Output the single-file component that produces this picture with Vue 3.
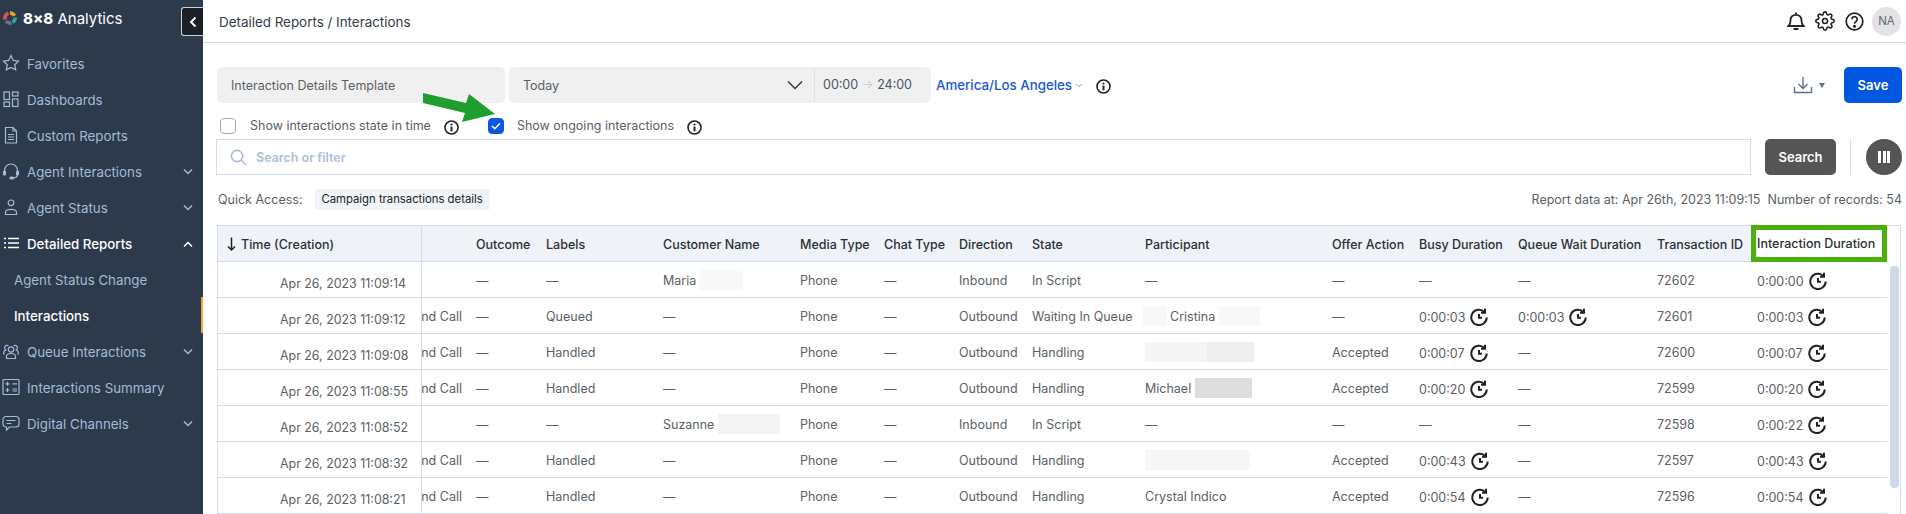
<script setup>
const nav = [
  { label: 'Favorites', icon: 'star' },
  { label: 'Dashboards', icon: 'dash' },
  { label: 'Custom Reports', icon: 'doc' },
  { label: 'Agent Interactions', icon: 'headset', chev: 'down' },
  { label: 'Agent Status', icon: 'person', chev: 'down' },
  { label: 'Detailed Reports', icon: 'list', chev: 'up', open: true },
  { label: 'Agent Status Change', sub: true },
  { label: 'Interactions', sub: true, active: true },
  { label: 'Queue Interactions', icon: 'group', chev: 'down' },
  { label: 'Interactions Summary', icon: 'calc' },
  { label: 'Digital Channels', icon: 'chat', chev: 'down' },
]
const heads = ['', 'Outcome', 'Labels', 'Customer Name', 'Media Type', 'Chat Type', 'Direction', 'State', 'Participant', 'Offer Action', 'Busy Duration', 'Queue Wait Duration', 'Transaction ID', 'Interaction Duration']
const d = '—'
const rows = [
  { time: 'Apr 26, 2023 11:09:14', type: '', labels: d, cust: 'Maria', custBlot: [{ w: 43, c: '#f8f8f8' }], dir: 'Inbound', state: 'In Script', part: d, offer: d, busy: d, wait: d, id: '72602', dur: '0:00:00' },
  { time: 'Apr 26, 2023 11:09:12', type: 'nd Call', labels: 'Queued', cust: d, dir: 'Outbound', state: 'Waiting In Queue', part: 'Cristina', partPre: 24, partBlot: [{ w: 41, c: '#f8f8f8' }], offer: d, busy: '0:00:03', wait: '0:00:03', id: '72601', dur: '0:00:03' },
  { time: 'Apr 26, 2023 11:09:08', type: 'nd Call', labels: 'Handled', cust: d, dir: 'Outbound', state: 'Handling', part: '', partBlot: [{ w: 62, c: '#f5f5f5' }, { w: 47, c: '#eeeeee' }], offer: 'Accepted', busy: '0:00:07', wait: d, id: '72600', dur: '0:00:07' },
  { time: 'Apr 26, 2023 11:08:55', type: 'nd Call', labels: 'Handled', cust: d, dir: 'Outbound', state: 'Handling', part: 'Michael', partBlot: [{ w: 57, c: '#dddddd' }], offer: 'Accepted', busy: '0:00:20', wait: d, id: '72599', dur: '0:00:20' },
  { time: 'Apr 26, 2023 11:08:52', type: '', labels: d, cust: 'Suzanne', custBlot: [{ w: 62, c: '#f4f4f4' }], dir: 'Inbound', state: 'In Script', part: d, offer: d, busy: d, wait: d, id: '72598', dur: '0:00:22' },
  { time: 'Apr 26, 2023 11:08:32', type: 'nd Call', labels: 'Handled', cust: d, dir: 'Outbound', state: 'Handling', part: '', partBlot: [{ w: 105, c: '#f6f6f6' }], offer: 'Accepted', busy: '0:00:43', wait: d, id: '72597', dur: '0:00:43' },
  { time: 'Apr 26, 2023 11:08:21', type: 'nd Call', labels: 'Handled', cust: d, dir: 'Outbound', state: 'Handling', part: 'Crystal Indico', offer: 'Accepted', busy: '0:00:54', wait: d, id: '72596', dur: '0:00:54' },
]
</script>

<template>
  <div class="app">
    <aside class="side">
      <div class="brand">
        <svg class="logo" width="14" height="14" viewBox="0 0 14 14" fill="none" stroke-width="3.600">
          <path d="M7 2a5 5 0 0 1 4.500 2.800" stroke="#eda22c" />
          <path d="M12 6.500a5 5 0 0 1-2.500 4.800" stroke="#2fa79a" />
          <path d="M8.500 11.800A5 5 0 0 1 3 10" stroke="#5e7a86" />
          <path d="M2.200 8.500A5 5 0 0 1 5.500 2.200" stroke="#d8584c" />
        </svg>
        <span class="brand-text"><b>8x8</b> Analytics</span>
        <button class="collapse">
          <svg width="8" height="12" viewBox="0 0 8 12" fill="none" stroke="#fff" stroke-width="2"><path d="M6.500 1.500 2 6l4.500 4.500" /></svg>
        </button>
      </div>
      <nav class="nav">
        <div v-for="n in nav" :key="n.label" class="item" :class="{ sub: n.sub, active: n.active, open: n.open }">
          <svg v-if="n.icon" class="ico" width="18" height="18" viewBox="0 0 18 18" fill="none" stroke="currentColor" stroke-width="1.200">
            <path v-if="n.icon === 'star'" d="M9 1.500l2.300 4.900 5.200.7-3.800 3.600 1 5.200L9 13.400l-4.700 2.500 1-5.200L1.500 7.100l5.200-.7z" />
            <g v-else-if="n.icon === 'dash'">
              <rect x="2" y="2" width="5.500" height="7.500" /><rect x="10.500" y="2" width="5.500" height="4" /><rect x="2" y="12" width="5.500" height="4.500" /><rect x="10.500" y="9" width="5.500" height="7.500" />
            </g>
            <g v-else-if="n.icon === 'doc'">
              <path d="M3.500 1.500h7.500l3.500 3.500v12h-11z" /><path d="M11 1.500V5h3.500M6 8.500h6M6 11h6M6 13.500h6" />
            </g>
            <g v-else-if="n.icon === 'headset'">
              <path d="M2.500 11V8.500a6.500 6.500 0 0 1 13 0V11" /><path d="M15.500 12c0 2.500-2 4-4.500 4" /><rect x="1.500" y="9" width="2" height="4" rx="1" fill="currentColor" /><rect x="14.500" y="9" width="2" height="4" rx="1" fill="currentColor" /><rect x="8" y="15" width="3.500" height="2" rx="1" fill="currentColor" />
            </g>
            <g v-else-if="n.icon === 'person'">
              <circle cx="9" cy="4.800" r="2.800" /><path d="M3.500 16.500v-2.200c0-1.800 1.800-3 5.500-3s5.500 1.200 5.500 3v2.200z" />
            </g>
            <g v-else-if="n.icon === 'list'" stroke-width="1.500">
              <path d="M6 4.500h11M6 9h11M6 13.500h11M2 4.500h2M2 9h2M2 13.500h2" />
            </g>
            <g v-else-if="n.icon === 'group'">
              <circle cx="9" cy="7.500" r="2.700" /><path d="M4.500 16.500v-2c0-1.600 1.800-3 4.500-3s4.500 1.400 4.500 3v2zM6.300 3.700a2.400 2.400 0 0 0-3.700 2.100c0 1 .5 1.700 1.200 2.100-1.400.6-2.200 1.600-2.200 3 0 .7.300 1.200.9 1.500M11.700 3.700a2.400 2.400 0 0 1 3.700 2.100c0 1-.5 1.700-1.200 2.100 1.400.6 2.200 1.600 2.200 3 0 .7-.3 1.200-.9 1.500" />
            </g>
            <g v-else-if="n.icon === 'calc'">
              <rect x="1" y="1.500" width="16" height="15" rx="1" /><path d="M3.500 5.800h4M5.500 3.800v4M3.500 12h4M5.500 10v4M10.500 5.800H15M10.500 11H15M10.500 13H15" />
            </g>
            <g v-else-if="n.icon === 'chat'">
              <path d="M4 2.500h10a3 3 0 0 1 3 3v4.500a3 3 0 0 1-3 3H7.500l-3 3v-3H4a3 3 0 0 1-3-3V5.500a3 3 0 0 1 3-3z" /><path d="M4.500 6.500h9M4.500 9.500h5" />
            </g>
          </svg>
          <span class="item-label">{{ n.label }}</span>
          <svg v-if="n.chev" class="chev" :class="{ up: n.chev === 'up' }" width="12" height="8" viewBox="0 0 12 8" fill="none" stroke="currentColor" stroke-width="1.500"><path d="M2 1.500l4 4 4-4" /></svg>
        </div>
      </nav>
    </aside>

    <main class="main">
      <header class="top">
        <span class="crumb">Detailed Reports / Interactions</span>
        <div class="top-icons">
          <svg width="18" height="20" viewBox="0 0 18 20" fill="none" stroke="#222" stroke-width="1.800"><path d="M1.500 15h15c-1.500-1.300-2-2.800-2-5.500C14.500 6 12.300 3.800 9 3.800S3.500 6 3.500 9.500c0 2.700-.5 4.200-2 5.500z" /><path d="M9 3.500V1.500M6.500 18h5" /></svg>
          <svg width="20" height="20" viewBox="0 0 24 24" fill="none" stroke="#222" stroke-width="1.900"><circle cx="12" cy="12" r="3" /><path d="M19.400 15a1.650 1.650 0 0 0 .33 1.820l.06.06a2 2 0 0 1 0 2.830 2 2 0 0 1-2.830 0l-.06-.06a1.650 1.650 0 0 0-1.820-.33 1.650 1.650 0 0 0-1 1.510V21a2 2 0 0 1-2 2 2 2 0 0 1-2-2v-.09A1.650 1.650 0 0 0 9 19.400a1.650 1.650 0 0 0-1.820.33l-.06.06a2 2 0 0 1-2.830 0 2 2 0 0 1 0-2.830l.06-.06a1.650 1.650 0 0 0 .33-1.820 1.650 1.650 0 0 0-1.510-1H3a2 2 0 0 1-2-2 2 2 0 0 1 2-2h.09A1.650 1.650 0 0 0 4.600 9a1.650 1.650 0 0 0-.33-1.820l-.06-.06a2 2 0 0 1 0-2.830 2 2 0 0 1 2.830 0l.06.06a1.650 1.650 0 0 0 1.820.33H9a1.650 1.650 0 0 0 1-1.510V3a2 2 0 0 1 2-2 2 2 0 0 1 2 2v.09a1.650 1.650 0 0 0 1 1.510 1.650 1.650 0 0 0 1.820-.33l.06-.06a2 2 0 0 1 2.830 0 2 2 0 0 1 0 2.830l-.06.06a1.650 1.650 0 0 0-.33 1.820V9a1.650 1.650 0 0 0 1.510 1H21a2 2 0 0 1 2 2 2 2 0 0 1-2 2h-.09a1.650 1.650 0 0 0-1.510 1z" /></svg>
          <svg width="19" height="19" viewBox="0 0 19 19" fill="none" stroke="#222" stroke-width="1.700"><circle cx="9.500" cy="9.500" r="8.300" /><path d="M6.800 7.300a2.700 2.700 0 1 1 4.100 2.300c-.9.600-1.400 1-1.400 2.100" /><circle cx="9.500" cy="14.200" r=".7" fill="#222" /></svg>
          <span class="avatar">NA</span>
        </div>
      </header>

      <section class="content">
        <div class="controls">
          <div class="pill template">Interaction Details Template</div>
          <div class="pill range">
            <span class="range-label">Today</span>
            <svg class="range-chev" width="16" height="10" viewBox="0 0 16 10" fill="none" stroke="#333" stroke-width="1.400"><path d="M1 1.500l7 7 7-7" /></svg>
            <span class="range-time">00:00 <i>→</i> 24:00</span>
          </div>
          <span class="tz">America/Los Angeles</span>
          <svg class="tz-chev" width="8" height="5" viewBox="0 0 8 5" fill="none" stroke="#7fa2e0" stroke-width="1"><path d="M1 1l3 3 3-3" /></svg>
          <svg class="info tz-info" width="15" height="15" viewBox="0 0 15 15"><use href="#info-g" /></svg>
          <div class="spacer"></div>
          <svg width="20" height="18" viewBox="0 0 20 18" fill="none" stroke="#5c7088" stroke-width="1.400"><path d="M10 1v11M5.500 8l4.500 4.500L14.500 8M1.500 11v5.500h17V11" /></svg>
          <span class="caret"></span>
          <button class="save">Save</button>
        </div>

        <div class="checks">
          <span class="box"></span>
          <span class="check-label first">Show interactions state in time</span>
          <svg class="info" width="15" height="15" viewBox="0 0 15 15">
            <defs><g id="info-g"><circle cx="7.500" cy="7.500" r="6.500" fill="none" stroke="#222" stroke-width="1.600" /><circle cx="7.500" cy="4.500" r="1.100" fill="#222" /><path d="M7.500 6.600v4.700" stroke="#222" stroke-width="2" /></g></defs>
            <use href="#info-g" />
          </svg>
          <span class="box on">
            <svg width="10" height="8" viewBox="0 0 10 8" fill="none" stroke="#fff" stroke-width="1.400"><path d="M1 4l2.800 2.800L9 1.200" /></svg>
          </span>
          <span class="check-label second">Show ongoing interactions</span>
          <svg class="info" width="15" height="15" viewBox="0 0 15 15"><use href="#info-g" /></svg>
        </div>
        <svg class="arrow" width="78" height="34" viewBox="0 0 78 34"><path d="M3 3 L46 13 L49 4 L75 24 L42 32 L45 23 L3 13 Z" fill="#1e9e2f" /></svg>

        <div class="search-row">
          <div class="search">
            <svg width="17" height="17" viewBox="0 0 17 17" fill="none" stroke="#a9bdd8" stroke-width="1.600"><circle cx="7" cy="7" r="5.600" /><path d="M11 11l5 5" /></svg>
            <span>Search or filter</span>
          </div>
          <button class="search-btn">Search</button>
          <span class="vline"></span>
          <button class="cols"><i></i><i></i><i></i></button>
        </div>

        <div class="quick">
          <span class="quick-label">Quick Access:</span>
          <span class="chip">Campaign transactions details</span>
          <div class="spacer"></div>
          <span class="meta">Report data at: Apr 26th, 2023 11:09:15</span>
          <span class="meta records">Number of records: 54</span>
        </div>

        <div class="table">
          <div class="fixed">
            <div class="fixed-head">
              <svg width="11" height="16" viewBox="0 0 11 16" fill="none" stroke="#222" stroke-width="1.500"><path d="M5.500 1.500v12.500M2 10.500l3.500 3.500L9 10.500" /></svg>
              Time (Creation)
            </div>
            <div v-for="r in rows" :key="r.id" class="fixed-cell">{{ r.time }}</div>
          </div>
          <div class="scroll">
            <div class="grid head">
              <div v-for="(h, i) in heads" :key="i" class="cell" :class="{ hl: i === 13 }">{{ h }}</div>
            </div>
            <div v-for="r in rows" :key="r.id" class="grid body">
              <div class="cell clip">{{ r.type }}</div>
              <div class="cell">{{ d }}</div>
              <div class="cell">{{ r.labels }}</div>
              <div class="cell">
                {{ r.cust }}
                <span v-for="(b, i) in r.custBlot" :key="i" class="blot" :style="{ width: b.w + 'px', background: b.c }"></span>
              </div>
              <div class="cell">Phone</div>
              <div class="cell">{{ d }}</div>
              <div class="cell">{{ r.dir }}</div>
              <div class="cell">{{ r.state }}</div>
              <div class="cell">
                <span v-if="r.partPre" class="blot pre" :style="{ width: r.partPre + 'px', background: '#f8f8f8' }"></span>
                {{ r.part }}
                <span v-for="(b, i) in r.partBlot" :key="i" class="blot" :class="{ tight: !r.part }" :style="{ width: b.w + 'px', background: b.c }"></span>
              </div>
              <div class="cell">{{ r.offer }}</div>
              <div class="cell">
                <span :class="{ timer: r.busy !== d }">{{ r.busy }}
                  <svg v-if="r.busy !== d" width="18" height="18" viewBox="0 0 18 18" fill="none" stroke="#222" stroke-width="2"><path d="M14.400 3.900A7.700 7.700 0 1 0 16.700 9.500" /><path d="M15 .8v4h-4" /><path d="M9 6v3.700h3" /></svg>
                </span>
              </div>
              <div class="cell">
                <span :class="{ timer: r.wait !== d }">{{ r.wait }}
                  <svg v-if="r.wait !== d" width="18" height="18" viewBox="0 0 18 18" fill="none" stroke="#222" stroke-width="2"><path d="M14.400 3.900A7.700 7.700 0 1 0 16.700 9.500" /><path d="M15 .8v4h-4" /><path d="M9 6v3.700h3" /></svg>
                </span>
              </div>
              <div class="cell">{{ r.id }}</div>
              <div class="cell last">
                <span class="timer">{{ r.dur }}
                  <svg width="18" height="18" viewBox="0 0 18 18" fill="none" stroke="#222" stroke-width="2"><path d="M14.400 3.900A7.700 7.700 0 1 0 16.700 9.500" /><path d="M15 .8v4h-4" /><path d="M9 6v3.700h3" /></svg>
                </span>
              </div>
            </div>
          </div>
          <div class="track"><div class="thumb"></div></div>
        </div>
      </section>
    </main>
  </div>
</template>

<style>
html, body { margin: 0; overflow: hidden; background: #fff; }
</style>

<style scoped>
.app {
  display: flex;
  width: 1906px;
  height: 514px;
  overflow: hidden;
  font-family: Inter, "Liberation Sans", sans-serif;
  font-size: 12.500px;
  color: #5a5f66;
}
.side {
  width: 203px;
  flex: none;
  background: #2c3a4b;
  color: #a4bbd9;
  font-size: 13.300px;
}
.brand {
  height: 45px;
  display: flex;
  align-items: center;
  padding-left: 3px;
  position: relative;
}
.logo { margin-right: 6px; margin-top: -9px; }
.brand-text { color: #fff; font-size: 15px; margin-top: -9px; }
.brand-text b { font-weight: 800; }
.collapse {
  position: absolute;
  left: 181px;
  top: 7px;
  width: 22px;
  height: 29px;
  padding: 0;
  border: 1px solid #c8d3e0;
  border-right: 0;
  border-radius: 3px 0 0 3px;
  background: #1b2026;
  display: flex;
  align-items: center;
  justify-content: center;
}
.item {
  height: 36px;
  display: flex;
  align-items: center;
  padding-left: 2px;
  position: relative;
}
.item-label { padding-top: 1px; }
.ico { flex: none; margin-right: 7px; }
.item.sub { padding-left: 14px; }
.item.open { color: #fff; font-weight: 500; }
.item.active { color: #fff; font-weight: 500; }
.item.active::after {
  content: '';
  position: absolute;
  right: 0;
  top: 0;
  bottom: 0;
  width: 2px;
  background: #f2a93b;
}
.chev { position: absolute; left: 182px; top: 15px; }
.chev.up { transform: rotate(180deg); color: #fff; }

.main { flex: 1; min-width: 0; display: flex; flex-direction: column; }
.top {
  height: 42px;
  flex: none;
  border-bottom: 1px solid #d3dde9;
  display: flex;
  align-items: center;
  padding: 0 5px 0 16px;
}
.crumb { font-size: 13.400px; color: #333b46; padding-top: 1px; }
.top-icons { margin-left: auto; display: flex; align-items: center; gap: 10px; }
.avatar {
  width: 29px;
  height: 29px;
  margin-left: -2px;
  border-radius: 50%;
  background: #e3e3e3;
  color: #5c6a7a;
  font-size: 11.500px;
  display: flex;
  align-items: center;
  justify-content: center;
}
.content { position: relative; padding: 24px 4px 0 13px; display: flex; flex-direction: column; }
.controls { display: flex; align-items: center; height: 36px; padding-left: 1px; }
.pill { height: 36px; background: #f0f0f0; border-radius: 5px; display: flex; align-items: center; }
.template { width: 288px; padding-left: 14px; box-sizing: border-box; margin-right: 4px; }
.range { width: 422px; position: relative; box-sizing: border-box; padding-left: 14px; }
.range-label { flex: 1; }
.range-chev { margin-right: 11px; }
.range-time {
  width: 117px;
  box-sizing: border-box;
  padding-left: 8px;
  border-left: 1px solid #dde0e4;
  line-height: 34px;
  color: #4a5564;
}
.range-time i { font-style: normal; color: #c3cfde; }
.tz { color: #1a56d6; font-weight: 500; margin-left: 5px; font-size: 13.300px; }
.tz-chev { margin-left: 3px; }
.tz-info { margin-left: 13px; margin-top: 0; }
.spacer { flex: 1; }
.caret {
  width: 0; height: 0;
  margin: 0 19px 0 6px;
  border-left: 3.500px solid transparent;
  border-right: 3.500px solid transparent;
  border-top: 5px solid #5c7088;
}
.save {
  width: 58px; height: 36px;
  background: #0256e0; color: #fff;
  border: 0; border-radius: 5px;
  font: 600 13px Inter, sans-serif;
}
.checks { display: flex; align-items: flex-start; height: 21px; margin-top: 15px; padding-left: 4px; }
.box {
  width: 16px; height: 16px;
  flex: none;
  box-sizing: border-box;
  border: 1.500px solid #a9a9a9;
  border-radius: 4px;
  display: flex; align-items: center; justify-content: center;
}
.box.on { background: #0b57e3; border-color: #0b57e3; margin-left: 29px; }
.check-label { margin-left: 14px; line-height: 16px; }
.check-label.second { margin-left: 13px; }
.info { margin-left: 13px; margin-top: 2px; flex: none; }
.arrow { position: absolute; left: 217px; top: 47px; }
.search-row { display: flex; align-items: center; height: 36px; }
.search {
  width: 1535px; height: 36px;
  box-sizing: border-box;
  border: 1px solid #d3dde9;
  display: flex; align-items: center;
  padding-left: 13px;
  color: #adc0d9;
  font-weight: 600;
}
.search span { margin-left: 9px; }
.search-btn {
  width: 71px; height: 36px;
  margin-left: 14px;
  background: #555; color: #fff;
  border: 0; border-radius: 5px;
  font: 600 13px Inter, sans-serif;
}
.vline { width: 1px; height: 36px; background: #d3dde9; margin: 0 15px 0 14px; }
.cols {
  width: 36px; height: 36px;
  border: 0; border-radius: 50%;
  background: #555;
  display: flex; align-items: center; justify-content: center; gap: 1.500px;
  padding: 0;
}
.cols i { width: 3px; height: 12px; background: #fff; }
.quick { display: flex; align-items: center; height: 21px; margin-top: 14px; padding-left: 2px; }
.chip {
  margin-left: 12px;
  height: 21px;
  padding: 0 7px;
  background: #f0f3f8;
  border-radius: 3px;
  line-height: 21px;
  font-size: 11.300px;
  color: #222;
}
.records { margin-left: 7px; }
.table {
  position: relative;
  display: flex;
  margin: 15px 0 0 1px;
  width: 1684px;
  border-top: 1px solid #d3dde9;
  border-left: 1px solid #d3dde9;
  border-right: 1px solid #d3dde9;
  box-sizing: border-box;
}
.fixed { width: 204px; flex: none; box-sizing: border-box; border-right: 1px solid #d3dde9; }
.fixed-head {
  height: 36px;
  background: #eff3f8;
  border-bottom: 1px solid #d3dde9;
  display: flex; align-items: center; gap: 4px;
  padding: 1px 0 0 8px;
  box-sizing: border-box;
  color: #2a2f36;
  font-weight: 500;
}
.fixed-cell {
  height: 36px;
  box-sizing: border-box;
  border-bottom: 1px solid #d3dde9;
  padding: 8px 0 0 62px;
  line-height: 28px;
  font-size: 12.400px;
  white-space: nowrap;
}
.scroll { flex: none; width: 1465px; }
.grid {
  display: grid;
  grid-template-columns: 54px 70px 117px 137px 84px 75px 73px 113px 187px 87px 99px 139px 94px 136px;
  height: 36px;
  padding-top: 1px;
  box-sizing: border-box;
  border-bottom: 1px solid #d3dde9;
  align-items: center;
}
.grid.head { background: #eff3f8; color: #2a2f36; font-weight: 500; }
.cell { white-space: nowrap; min-width: 0; display: flex; align-items: center; height: 100%; }
.cell.clip { justify-content: flex-end; overflow: hidden; padding-right: 14px; box-sizing: border-box; }
.cell.hl { box-shadow: inset 0 0 0 5px #4caf0a; padding-left: 6px; box-sizing: border-box; background: #fff; height: 37px; margin-top: -2px; margin-bottom: -1px; position: relative; }
.cell.last { padding-left: 6px; }
.blot { display: inline-block; height: 20px; margin-left: 4px; }
.blot.tight { margin-left: 0; }
.blot.pre { margin: 0 3px 0 -2px; }
.timer { display: flex; align-items: center; gap: 5px; padding-top: 2px; }
.track {
  position: absolute;
  right: 0; top: 36px; bottom: 0;
  width: 13px;
}
.thumb {
  position: absolute;
  left: 3px; top: 4px;
  width: 9px; height: 222px;
  background: #ccd9e8;
  border-radius: 4px;
}
</style>
